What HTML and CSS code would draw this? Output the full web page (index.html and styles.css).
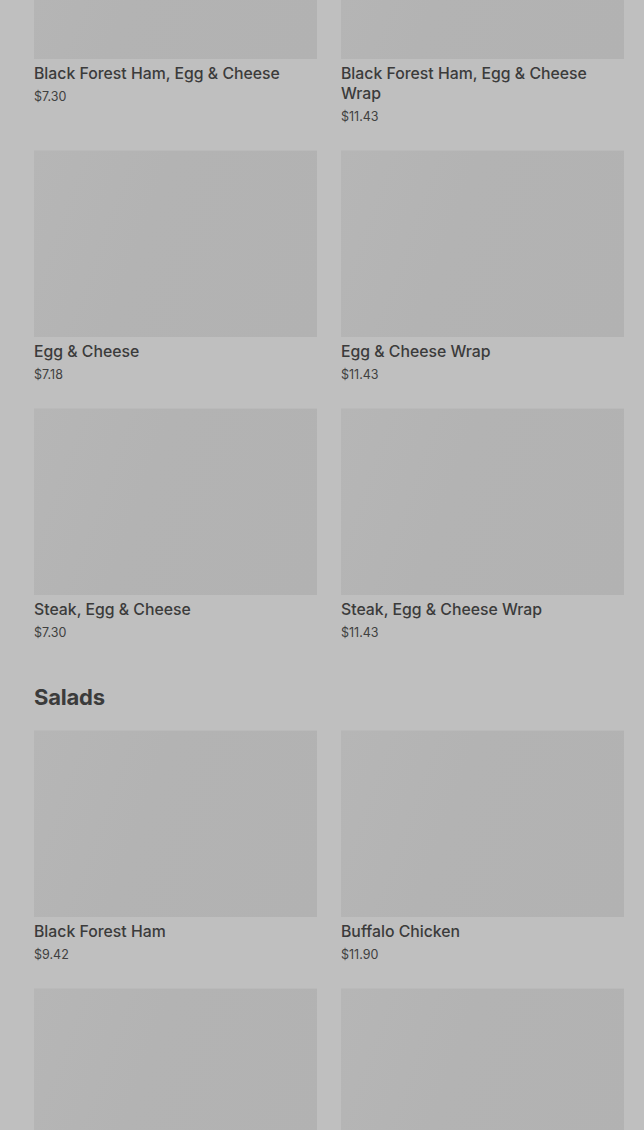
FILE: index.html
```html
<!DOCTYPE html>
<html lang="en">
<head>
    <meta charset="UTF-8">
    <meta name="viewport" content="width=device-width, initial-scale=1.0">
    <title>Menu</title>
    <link rel="stylesheet" href="styles.css">
</head>
<body>
    <main class="menu">
        <section class="category">
            <div class="grid">
                <div class="item">
                    <div class="thumb"></div>
                    <h3>Black Forest Ham, Egg &amp; Cheese</h3>
                    <p class="price">$7.30</p>
                </div>
                <div class="item">
                    <div class="thumb"></div>
                    <h3>Black Forest Ham, Egg &amp; Cheese Wrap</h3>
                    <p class="price">$11.43</p>
                </div>
                <div class="item">
                    <div class="thumb"></div>
                    <h3>Egg &amp; Cheese</h3>
                    <p class="price">$7.18</p>
                </div>
                <div class="item">
                    <div class="thumb"></div>
                    <h3>Egg &amp; Cheese Wrap</h3>
                    <p class="price">$11.43</p>
                </div>
                <div class="item">
                    <div class="thumb"></div>
                    <h3>Steak, Egg &amp; Cheese</h3>
                    <p class="price">$7.30</p>
                </div>
                <div class="item">
                    <div class="thumb"></div>
                    <h3>Steak, Egg &amp; Cheese Wrap</h3>
                    <p class="price">$11.43</p>
                </div>
            </div>
        </section>
        <section class="category">
            <h2>Salads</h2>
            <div class="grid">
                <div class="item">
                    <div class="thumb"></div>
                    <h3>Black Forest Ham</h3>
                    <p class="price">$9.42</p>
                </div>
                <div class="item">
                    <div class="thumb"></div>
                    <h3>Buffalo Chicken</h3>
                    <p class="price">$11.90</p>
                </div>
                <div class="item">
                    <div class="thumb"></div>
                </div>
                <div class="item">
                    <div class="thumb"></div>
                </div>
            </div>
        </section>
    </main>
</body>
</html>
```

FILE: styles.css
```css
:root {
    --page-bg: #bfbfbf;
    --thumb-bg: #b3b3b3;
    --text-color: #3b3b3b;
}
html, body {
    margin: 0;
    background-color: var(--page-bg);
}
body {
    font-family: 'Inter', 'Roboto', 'Liberation Sans', sans-serif;
    color: var(--text-color);
    overflow: hidden;
}
.menu {
    margin-top: -128px;
    padding: 0 20px 0 34px;
}
.category h2 {
    font-size: 22px;
    font-weight: 700;
    line-height: 32px;
    letter-spacing: -0.2px;
    margin: 38px 0 17px;
}
.grid {
    display: grid;
    grid-template-columns: 1fr 1fr;
    column-gap: 24px;
    row-gap: 23px;
}
.item h3 {
    font-size: 15.8px;
    font-weight: 500;
    line-height: 20px;
    margin: 5px 0 3px;
}
.thumb {
    height: 187px;
    background: linear-gradient(110deg, #b6b6b6 0%, #b3b3b3 40%, #b2b2b2 100%);
    box-shadow: inset 0 1px 0 #bababa;
}
.price {
    font-size: 12.5px;
    line-height: 20px;
    margin: 0;
    color: #404040;
}
```
